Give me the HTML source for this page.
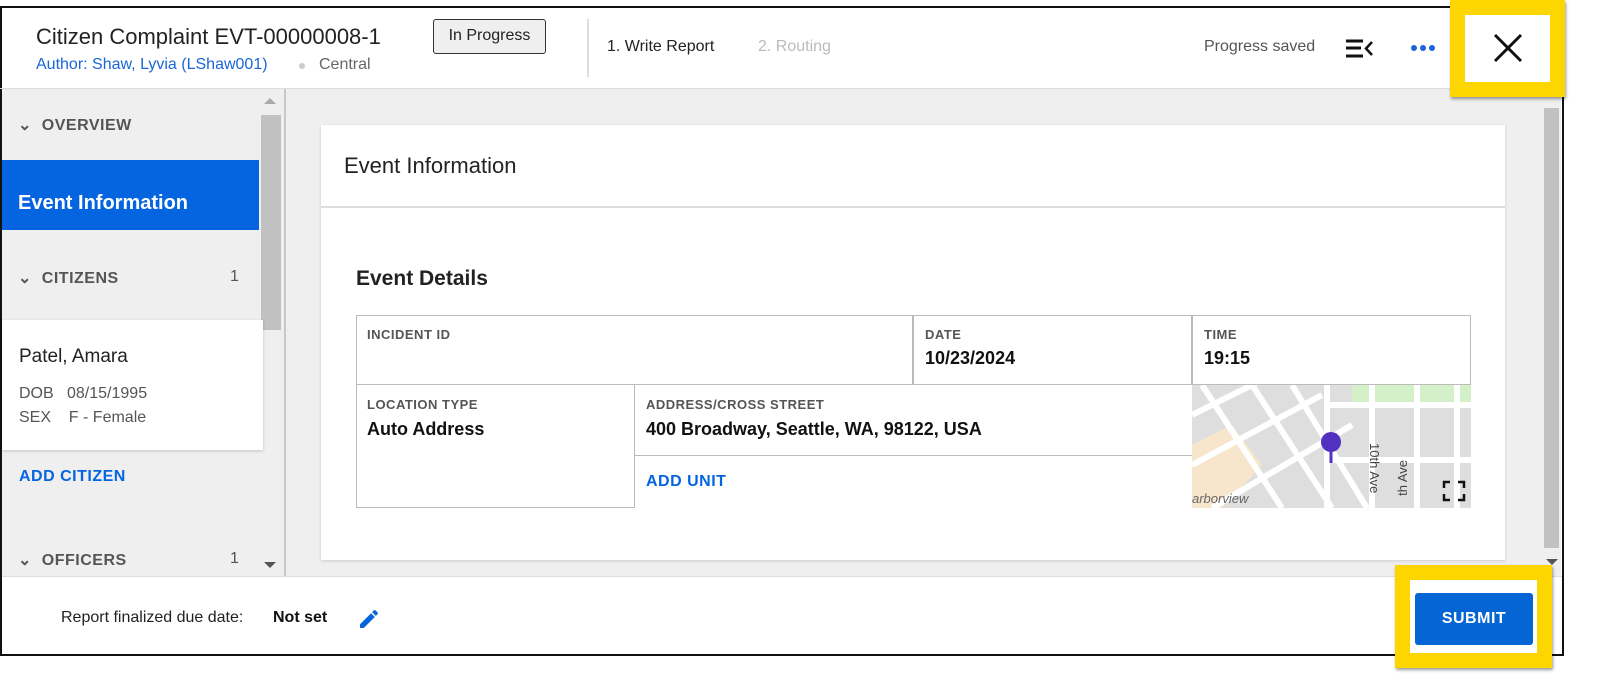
<!DOCTYPE html>
<html><head><meta charset="utf-8">
<style>
*{box-sizing:border-box;margin:0;padding:0}
body{width:1600px;height:688px;background:#fff;font-family:"Liberation Sans",Arial,sans-serif;position:relative;overflow:hidden;color:#222}
.abs{position:absolute}
.frame{left:0;top:6px;width:1564px;height:650px;border:2px solid #111;background:#fff}
.t{position:absolute;white-space:nowrap}
.lbl{font-size:13px;font-weight:bold;color:#555;letter-spacing:.5px}
.val{font-size:18px;font-weight:bold;color:#111}
</style></head><body>
<div class="abs frame"></div>
<!-- header -->
<div class="t" style="left:36px;top:24px;font-size:22px;color:#222">Citizen Complaint EVT-00000008-1</div>
<div class="t" style="left:36px;top:56px;font-size:16px;color:#1a66d6">Author: Shaw, Lyvia (LShaw001)</div>
<div class="abs" style="left:299px;top:63px;width:6px;height:6px;border-radius:3px;background:#ccc"></div>
<div class="t" style="left:319px;top:56px;font-size:16px;color:#666">Central</div>
<div class="abs" style="left:433px;top:19px;width:113px;height:35px;border:1.5px solid #333;border-radius:3px;background:#efefef;font-size:16px;text-align:center;line-height:32px;color:#222">In Progress</div>
<div class="abs" style="left:587px;top:19px;width:2px;height:58px;background:#ddd"></div>
<div class="t" style="left:607px;top:38px;font-size:16px;color:#222">1. Write Report</div>
<div class="t" style="left:758px;top:38px;font-size:16px;color:#bbb">2. Routing</div>
<div class="t" style="left:1204px;top:38px;font-size:16px;color:#555">Progress saved</div>
<svg class="abs" style="left:1345px;top:38px" width="30" height="22" viewBox="0 0 30 22"><g stroke="#111" stroke-width="3"><line x1="1" y1="3" x2="18" y2="3"/><line x1="1" y1="10" x2="16" y2="10"/><line x1="1" y1="18" x2="18" y2="18"/></g><polyline points="27,4 21,10.5 27,17" fill="none" stroke="#111" stroke-width="2.5"/></svg>
<div class="abs" style="left:1411px;top:45px;width:6px;height:6px;border-radius:3px;background:#1a66d6;box-shadow:9px 0 #1a66d6,18px 0 #1a66d6"></div>
<div class="abs" style="left:0;top:88px;width:1562px;height:1px;background:#ddd"></div>
<!-- sidebar -->
<div class="abs" style="left:2px;top:89px;width:258px;height:488px;background:#efefef"></div>
<div class="abs" style="left:260px;top:89px;width:24px;height:488px;background:#efefef"></div>
<div class="abs" style="left:261px;top:115px;width:20px;height:215px;background:#c1c1c1"></div>
<div class="abs" style="left:264px;top:98px;width:0;height:0;border-left:6px solid transparent;border-right:6px solid transparent;border-bottom:6px solid #aaa"></div>
<div class="abs" style="left:264px;top:562px;width:0;height:0;border-left:6px solid transparent;border-right:6px solid transparent;border-top:6px solid #555"></div>
<div class="abs" style="left:284px;top:89px;width:2px;height:488px;background:#c8c8c8"></div>
<div class="t" style="left:18px;top:115px;font-size:16px;font-weight:bold;color:#555;letter-spacing:.5px">⌄&nbsp; OVERVIEW</div>
<div class="abs" style="left:2px;top:160px;width:257px;height:70px;background:#0565e1"></div>
<div class="t" style="left:18px;top:192px;font-size:20px;font-weight:bold;color:#fff">Event Information</div>
<div class="t" style="left:18px;top:268px;font-size:16px;font-weight:bold;color:#555;letter-spacing:.5px">⌄&nbsp; CITIZENS</div>
<div class="t" style="left:230px;top:268px;font-size:16px;color:#555">1</div>
<div class="abs" style="left:2px;top:320px;width:261px;height:130px;background:#fff;box-shadow:0 1px 3px rgba(0,0,0,.2)"></div>
<div class="t" style="left:19px;top:346px;font-size:19px;color:#222">Patel, Amara</div>
<div class="t" style="left:19px;top:385px;font-size:16px;color:#555">DOB&nbsp;&nbsp; 08/15/1995</div>
<div class="t" style="left:19px;top:409px;font-size:16px;color:#555">SEX&nbsp;&nbsp;&nbsp; F - Female</div>
<div class="t" style="left:19px;top:468px;font-size:16px;font-weight:bold;color:#0565e1;letter-spacing:.5px">ADD CITIZEN</div>
<div class="t" style="left:18px;top:550px;font-size:16px;font-weight:bold;color:#555;letter-spacing:.5px">⌄&nbsp; OFFICERS</div>
<div class="t" style="left:230px;top:550px;font-size:16px;color:#555">1</div>
<!-- main -->
<div class="abs" style="left:286px;top:89px;width:1257px;height:488px;background:#efefef"></div>
<div class="abs" style="left:1543px;top:89px;width:18px;height:488px;background:#efefef"></div>
<div class="abs" style="left:1544px;top:108px;width:15px;height:440px;background:#c1c1c1"></div>
<div class="abs" style="left:1546px;top:559px;border-left:6px solid transparent;border-right:6px solid transparent;border-top:6px solid #555"></div>
<div class="abs" style="left:321px;top:125px;width:1184px;height:435px;background:#fff;box-shadow:0 1px 3px rgba(0,0,0,.15)"></div>
<div class="t" style="left:344px;top:153px;font-size:22px;color:#222">Event Information</div>
<div class="abs" style="left:321px;top:206px;width:1184px;height:2px;background:#ddd"></div>
<div class="t" style="left:356px;top:267px;font-size:21px;font-weight:bold;color:#222">Event Details</div>
<!-- table -->
<div class="abs" style="left:356px;top:315px;width:557px;height:70px;border:1px solid #bbb"></div>
<div class="abs" style="left:913px;top:315px;width:279px;height:70px;border:1px solid #bbb"></div>
<div class="abs" style="left:1192px;top:315px;width:279px;height:70px;border:1px solid #bbb"></div>
<div class="abs" style="left:356px;top:384px;width:279px;height:124px;border:1px solid #bbb"></div>
<div class="abs" style="left:634px;top:384px;width:559px;height:72px;border:1px solid #bbb;border-left:none"></div>
<div class="abs" style="left:634px;top:455px;width:558px;height:53px;border-left:1px solid #bbb"></div>
<div class="t lbl" style="left:367px;top:327px">INCIDENT ID</div>
<div class="t lbl" style="left:925px;top:327px">DATE</div>
<div class="t val" style="left:925px;top:348px">10/23/2024</div>
<div class="t lbl" style="left:1204px;top:327px">TIME</div>
<div class="t val" style="left:1204px;top:348px">19:15</div>
<div class="t lbl" style="left:367px;top:397px">LOCATION TYPE</div>
<div class="t val" style="left:367px;top:419px">Auto Address</div>
<div class="t lbl" style="left:646px;top:397px">ADDRESS/CROSS STREET</div>
<div class="t val" style="left:646px;top:419px">400 Broadway, Seattle, WA, 98122, USA</div>
<div class="t" style="left:646px;top:473px;font-size:16px;font-weight:bold;color:#0565e1;letter-spacing:.5px">ADD UNIT</div>
<!-- map -->
<svg class="abs" style="left:1192px;top:385px" width="279" height="123" viewBox="0 0 279 123">
<rect width="279" height="123" fill="#dedede"/>
<polygon points="0,60 40,40 70,80 30,123 0,123" fill="#f8e6cc"/>
<rect x="160" y="0" width="119" height="18" fill="#d3f0c8"/>
<g stroke="#fff" stroke-width="6" fill="none">
<line x1="0" y1="30" x2="80" y2="-10"/><line x1="0" y1="80" x2="130" y2="10"/><line x1="20" y1="123" x2="160" y2="40"/>
<line x1="60" y1="0" x2="140" y2="123"/><line x1="100" y1="0" x2="175" y2="123"/><line x1="10" y1="0" x2="90" y2="123"/>
<line x1="135" y1="0" x2="135" y2="123"/><line x1="135" y1="20" x2="279" y2="20"/><line x1="135" y1="75" x2="279" y2="75"/>
<line x1="180" y1="0" x2="180" y2="123"/><line x1="225" y1="0" x2="225" y2="123"/><line x1="265" y1="0" x2="265" y2="123"/>
</g>
<circle cx="139" cy="57" r="10" fill="#5230c0"/><rect x="137.5" y="60" width="3" height="18" fill="#5230c0"/>
<text x="0" y="118" font-size="13" font-style="italic" fill="#666" font-family="Liberation Sans">arborview</text>
<text transform="translate(178,58) rotate(90)" font-size="13" fill="#444" font-family="Liberation Sans">10th Ave</text>
<text transform="translate(215,75) rotate(-90)" font-size="13" fill="#444" font-family="Liberation Sans" text-anchor="end">th Ave</text>
<g stroke="#111" stroke-width="2.5" fill="none"><polyline points="252,103 252,97 258,97"/><polyline points="266,97 272,97 272,103"/><polyline points="252,109 252,115 258,115"/><polyline points="266,115 272,115 272,109"/></g>
</svg>
<!-- footer -->
<div class="abs" style="left:2px;top:576px;width:1560px;height:1px;background:#ddd"></div>
<div class="t" style="left:61px;top:609px;font-size:16px;color:#222">Report finalized due date:</div>
<div class="t" style="left:273px;top:609px;font-size:16px;font-weight:bold;color:#111">Not set</div>
<svg class="abs" style="left:357px;top:607px" width="24" height="24" viewBox="0 0 24 24"><path d="M3 17.25V21h3.75L17.8 9.94l-3.75-3.75L3 17.25zM20.7 7.04a1 1 0 000-1.410l-2.34-2.34a1 1 0 00-1.41 0l-1.83 1.83 3.75 3.75 1.83-1.830z" fill="#0565e1"/></svg>
<!-- yellow boxes -->
<div class="abs" style="left:1450px;top:0;width:115px;height:97px;border:15px solid #fdd600;background:#fff;box-shadow:1px 2px 3px rgba(0,0,0,.4)"></div>
<svg class="abs" style="left:1493px;top:33px" width="30" height="30" viewBox="0 0 30 30"><g stroke="#111" stroke-width="3"><line x1="2" y1="2" x2="28" y2="28"/><line x1="28" y1="2" x2="2" y2="28"/></g></svg>
<div class="abs" style="left:1395px;top:565px;width:157px;height:103px;border:15px solid #fdd600;background:#fff;box-shadow:1px 2px 3px rgba(0,0,0,.4)"></div>
<div class="abs" style="left:1415px;top:593px;width:118px;height:52px;background:#0565d4;border-radius:3px;color:#fff;font-size:16px;font-weight:bold;text-align:center;line-height:52px;letter-spacing:.5px">SUBMIT</div>
</body></html>
